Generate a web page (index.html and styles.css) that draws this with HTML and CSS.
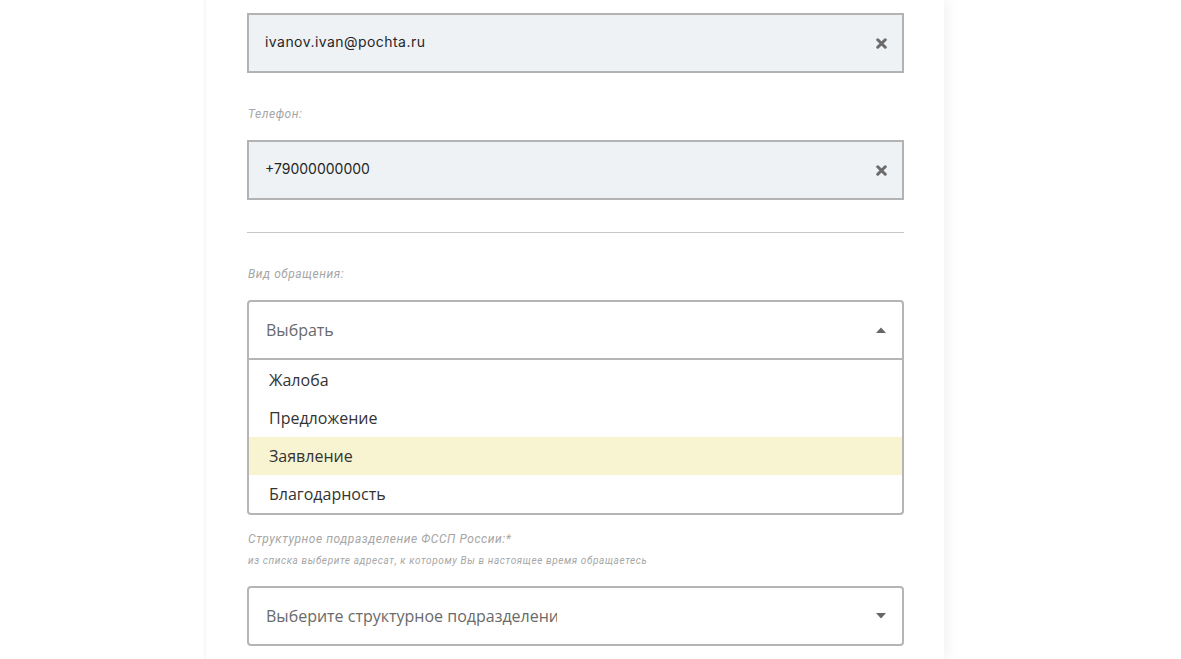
FILE: index.html
```html
<!DOCTYPE html>
<html lang="ru">
<head>
<meta charset="utf-8">
<title>Обращение</title>
<link rel="stylesheet" href="styles.css">
</head>
<body>
<div class="page">
  <main class="column">
    <div class="field field-first">
      <div class="input filled">
        <span class="value email">ivanov.ivan@pochta.ru</span>
        <svg class="clear" viewBox="0 0 10 10" width="11" height="11"><path d="M1.6 1.6 L8.4 8.4 M8.4 1.6 L1.6 8.4" stroke="#6b6b6b" stroke-width="2.8" stroke-linecap="round"/></svg>
      </div>
    </div>
    <div class="field">
      <div class="label">Телефон:</div>
      <div class="input filled">
        <span class="value">+79000000000</span>
        <svg class="clear" viewBox="0 0 10 10" width="11" height="11"><path d="M1.6 1.6 L8.4 8.4 M8.4 1.6 L1.6 8.4" stroke="#6b6b6b" stroke-width="2.8" stroke-linecap="round"/></svg>
      </div>
    </div>
    <hr class="divider">
    <div class="field field-after-divider">
      <div class="label">Вид обращения:</div>
      <div class="select open">
        <span class="placeholder">Выбрать</span>
        <svg class="caret" viewBox="0 0 10 6" width="10" height="6"><path d="M0 6 L5 0.5 L10 6 Z" fill="#666"/></svg>
      </div>
      <ul class="dropdown">
        <li class="option">Жалоба</li>
        <li class="option">Предложение</li>
        <li class="option active">Заявление</li>
        <li class="option">Благодарность</li>
      </ul>
    </div>
    <div class="field field-after-dropdown">
      <div class="label">Структурное подразделение ФССП России:*</div>
      <div class="hint">из списка выберите адресат, к которому Вы в настоящее время обращаетесь</div>
      <div class="select">
        <span class="placeholder clip">Выберите структурное подразделение</span>
        <svg class="caret" viewBox="0 0 10 6" width="10" height="6"><path d="M0 0 L10 0 L5 5.5 Z" fill="#666"/></svg>
      </div>
    </div>
  </main>
</div>
</body>
</html>
```

FILE: styles.css
```css
* { box-sizing: border-box; }
html, body { margin: 0; padding: 0; background: #ffffff; }
body { font-family: "Open Sans", "Liberation Sans", sans-serif; overflow: hidden; }

.page {
  display: flex;
  padding-left: 206px;
  height: 659px;
}

.column {
  width: 738px;
  background: #fff;
  padding: 13px 40px 0 41px;
  box-shadow: -2px 0 2px rgba(0,0,0,0.035), 6px 0 10px rgba(0,0,0,0.04);
}

.field { display: flex; flex-direction: column; }
.field + .field { margin-top: 33px; }
.field-after-divider { margin-top: 33px; }
.field.field-after-dropdown { margin-top: 16px; }

.label {
  font-family: Roboto, "Liberation Sans", sans-serif;
  font-style: italic;
  font-size: 12px;
  line-height: 16px;
  color: #a6a6a6;
  letter-spacing: 0.55px;
  margin-left: 1px;
  margin-bottom: 18px;
}

.field-after-dropdown .label { margin-bottom: 8px; }

.hint {
  font-family: Roboto, "Liberation Sans", sans-serif;
  font-style: italic;
  font-size: 10px;
  line-height: 12px;
  color: #a6a6a6;
  letter-spacing: 0.62px;
  margin-left: 1px;
  margin-bottom: 19px;
}

.input {
  height: 60px;
  border: 2px solid #b3b3b3;
  background: #eef2f5;
  display: flex;
  align-items: center;
  padding: 0 15px 0 16px;
}

.value {
  flex: 1;
  font-family: Inter, "Noto Sans", sans-serif;
  font-size: 14px;
  color: #262626;
  margin-top: -3px;
}

.value.email { letter-spacing: 0.45px; }

.clear { flex: none; margin-top: 1px; }

.divider {
  border: 0;
  border-top: 1px solid #c6c6c6;
  margin: 32px 0 0 0;
  height: 0;
}

.select {
  height: 60px;
  border: 2px solid #b5b5b5;
  border-radius: 4px;
  background: #fff;
  display: flex;
  align-items: center;
  padding: 0 16px 0 17px;
}

.select.open { border-radius: 4px 4px 0 0; }

.placeholder {
  flex: 1;
  font-size: 16px;
  color: #6a6a6a;
  white-space: nowrap;
  overflow: hidden;
}

.placeholder.clip { flex: none; width: 291px; margin-right: auto; }

.caret { flex: none; }

.dropdown {
  list-style: none;
  margin: 0;
  padding: 1px 0 0 0;
  border: 2px solid #b5b5b5;
  border-top: 0;
  border-radius: 0 0 4px 4px;
  background: #fff;
}

.option {
  height: 38px;
  line-height: 38px;
  font-size: 16px;
  color: #333;
  padding-left: 20px;
}

.option.active { background: #f8f3d0; }
```
